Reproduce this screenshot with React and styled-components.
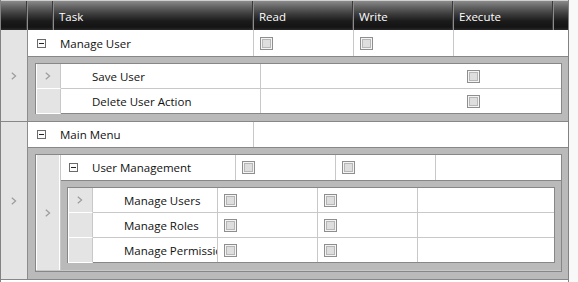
import React from 'react'
import styled, { createGlobalStyle } from 'styled-components'

const GlobalStyle = createGlobalStyle`
  html, body {
    margin: 0;
    padding: 0;
    background: #f8f8f8;
  }
  * {
    box-sizing: border-box;
  }
`

const Grid = styled.div`
  width: 569px;
  min-height: 100vh;
  background: #fff;
  border-left: 1px solid #828282;
  border-right: 1px solid #828282;
  font-family: "Open Sans", "Liberation Sans", sans-serif;
  font-size: 11.5px;
  color: #111;
`

const Header = styled.div`
  display: flex;
  height: 30px;
  border-top: 1px solid #cfcfcf;
  background: linear-gradient(to bottom, #8a8a8a 0%, #646464 20%, #3c3c3c 45%, #1a1a1a 70%, #141414 90%, #2a2a2a 100%);
`

const HeadCell = styled.div`
  width: ${p => (p.$w ? `${p.$w}px` : 'auto')};
  flex: ${p => (p.$w ? 'none' : 1)};
  border-right: 1px solid #8c8c8c;
  box-shadow: inset -1px 0 0 #3a3a3a;
  color: #fff;
  padding: 5px 0 0 5px;
  line-height: 22px;
  &:last-child {
    border-right: none;
    box-shadow: none;
  }
`

const Group = styled.div`
  display: flex;
  border-bottom: 1px solid ${p => p.$dark ? '#878787' : '#c8c8c8'};
`

const RowHeader = styled.div`
  width: ${p => p.$w}px;
  flex: none;
  display: flex;
  align-items: center;
  justify-content: center;
  background: #e4e4e4;
  border-right: 1px solid ${p => p.$edge};
  box-shadow: ${p => p.$inset ? 'inset 1px 0 0 #fff, inset -1px 0 0 #fff' : 'none'};
`

const Body = styled.div`
  flex: 1;
  min-width: 0;
  display: flex;
  flex-direction: column;
`

const Row = styled.div`
  display: flex;
  height: ${p => p.$h}px;
  align-items: stretch;
`

const NestedRow = styled.div`
  display: flex;
  height: 25px;
  border-bottom: 1px solid #c8c8c8;
  &:last-child {
    height: 24px;
    border-bottom: none;
  }
`

const HeaderCellSmall = styled.div`
  width: 25px;
  flex: none;
  display: flex;
  align-items: center;
  justify-content: center;
  background: #e4e4e4;
  margin-bottom: -1px;
  border-right: 1px solid #c8c8c8;
  border-bottom: 1px solid #fff;
  box-shadow: inset 1px 0 0 #fff;
`

const Cell = styled.div`
  width: ${p => (p.$w ? `${p.$w}px` : 'auto')};
  flex: ${p => (p.$w ? 'none' : 1)};
  display: flex;
  align-items: center;
  justify-content: ${p => (p.$center ? 'center' : 'flex-start')};
  padding-left: ${p => (p.$center ? 0 : 6)}px;
  border-right: ${p => (p.$line ? '1px solid #c8c8c8' : 'none')};
  overflow: hidden;
  white-space: nowrap;
`

const Details = styled.div`
  background: #bababa;
  border-top: 1px solid #878787;
  padding: 6px 6px 7px ${p => p.$left}px;
`

const SubGrid = styled.div`
  background: #fff;
  border: 1px solid #878787;
`

const Expander = styled.span`
  position: relative;
  width: 9px;
  height: 9px;
  border: 1px solid #6a6a6a;
  background: #fbfbfb;
  &::after {
    content: '';
    position: absolute;
    left: 1px;
    right: 1px;
    top: 3px;
    height: 1px;
    background: #222;
  }
`

const Box = styled.span`
  width: 13px;
  height: 13px;
  padding: 1px;
  border: 1px solid #8e8e8e;
  background: #f4f4f4;
  display: flex;
  &::after {
    content: '';
    flex: 1;
    border: 1px solid #b6b6b6;
    background: #dedede;
  }
`

const Chevron = () => (
  <svg width="6" height="8" viewBox="0 0 6 8">
    <polyline points="0.8,0.8 4.6,4 0.8,7.2" fill="none" stroke="#9c9c9c" strokeWidth="1.2" />
  </svg>
)

const Check = () => <Box />

export default function App() {
  return (
    <>
      <GlobalStyle />
      <Grid>
        <Header>
          <HeadCell $w={27} />
          <HeadCell $w={26} />
          <HeadCell $w={200}>Task</HeadCell>
          <HeadCell $w={100}>Read</HeadCell>
          <HeadCell $w={100}>Write</HeadCell>
          <HeadCell $w={100}>Execute</HeadCell>
          <HeadCell />
        </Header>

        <Group $dark>
          <RowHeader $w={27} $edge="#8c8c8c"><Chevron /></RowHeader>
          <Body>
            <Row $h={26}>
              <Cell $w={26} $center><Expander /></Cell>
              <Cell $w={200} $line>Manage User</Cell>
              <Cell $w={100} $line><Check /></Cell>
              <Cell $w={100} $line><Check /></Cell>
              <Cell />
            </Row>
            <Details $left={7}>
              <SubGrid>
                {['Save User', 'Delete User Action'].map((name, i) => (
                  <NestedRow key={name}>
                    <HeaderCellSmall>{i === 0 && <Chevron />}</HeaderCellSmall>
                    <Cell $w={25} />
                    <Cell $w={175} $line>{name}</Cell>
                    <Cell $w={200} />
                    <Cell><Check /></Cell>
                  </NestedRow>
                ))}
              </SubGrid>
            </Details>
          </Body>
        </Group>

        <Group $dark>
          <RowHeader $w={27} $edge="#8c8c8c"><Chevron /></RowHeader>
          <Body>
            <Row $h={25}>
              <Cell $w={26} $center><Expander /></Cell>
              <Cell $w={200} $line>Main Menu</Cell>
              <Cell />
            </Row>
            <Details $left={7}>
              <SubGrid>
                <Group>
                  <RowHeader $w={25} $edge="#c8c8c8" $inset><Chevron /></RowHeader>
                  <Body>
                    <Row $h={25}>
                      <Cell $w={25} $center><Expander /></Cell>
                      <Cell $w={150} $line>User Management</Cell>
                      <Cell $w={100} $line><Check /></Cell>
                      <Cell $w={100} $line><Check /></Cell>
                      <Cell />
                    </Row>
                    <Details $left={6}>
                      <SubGrid>
                        {['Manage Users', 'Manage Roles', 'Manage Permissions'].map((name, i) => (
                          <NestedRow key={name}>
                            <HeaderCellSmall>{i === 0 && <Chevron />}</HeaderCellSmall>
                            <Cell $w={25} />
                            <Cell $w={100} $line>{name}</Cell>
                            <Cell $w={100} $line><Check /></Cell>
                            <Cell $w={100} $line><Check /></Cell>
                            <Cell />
                          </NestedRow>
                        ))}
                      </SubGrid>
                    </Details>
                  </Body>
                </Group>
              </SubGrid>
            </Details>
          </Body>
        </Group>
      </Grid>
    </>
  )
}
